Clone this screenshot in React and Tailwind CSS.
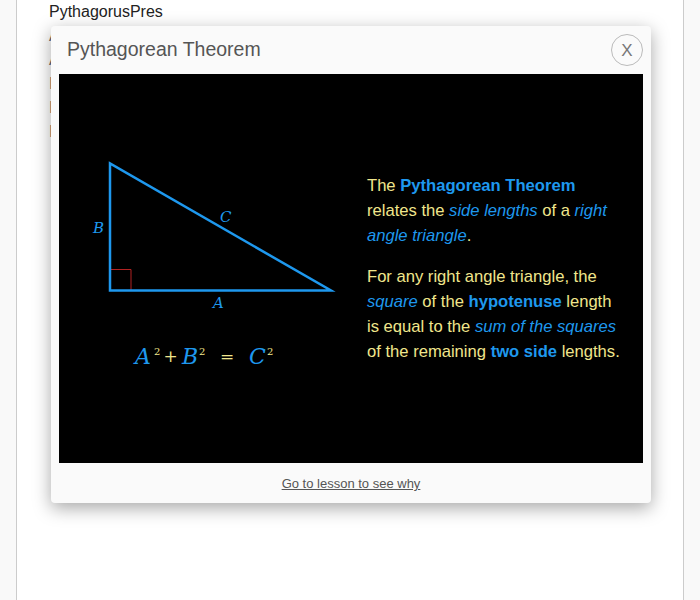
import React from "react";

const BLUE = "#1e98ee";
const KHAKI = "#f0e68c";

function Diagram() {
  return (
    <svg width="308" height="389" viewBox="0 0 308 389" className="shrink-0">
      <polyline points="51,195.5 72,195.5 72,216.5" fill="none" stroke="#b22222" strokeWidth="1" />
      <polygon points="51,89.5 51,216.5 272,216.5" fill="none" stroke={BLUE} strokeWidth="2.5" />
      <g fontFamily="'DejaVu Serif', serif" fontStyle="italic" fill={BLUE} fontSize="15">
        <text x="34" y="159">B</text>
        <text x="161" y="148">C</text>
        <text x="154" y="234">A</text>
      </g>
      <g fontFamily="'DejaVu Serif', serif" fontSize="22">
        <text x="76" y="290" fill={BLUE} fontStyle="italic">A</text>
        <text x="95" y="281" fill={KHAKI} fontSize="10">2</text>
        <text x="111.5" y="288" fill={KHAKI} fontSize="17" textAnchor="middle">+</text>
        <text x="123" y="290" fill={BLUE} fontStyle="italic">B</text>
        <text x="140" y="281" fill={KHAKI} fontSize="10">2</text>
        <text x="168" y="288" fill={KHAKI} fontSize="17" textAnchor="middle">=</text>
        <text x="190" y="290" fill={BLUE} fontStyle="italic">C</text>
        <text x="208" y="281" fill={KHAKI} fontSize="10">2</text>
      </g>
    </svg>
  );
}

export default function App() {
  return (
    <div className="min-h-[600px] bg-[#f9f9f9] px-[16px] font-['Liberation_Sans',Arial,sans-serif]">
      <div className="relative h-[600px] border-x border-[#cccccc] bg-white px-[32px] text-[16px] leading-6 text-[#222222]">
        <div>PythagorusPres</div>
        <div className="text-[#666666]">A right angle triangle</div>
        <div className="text-[#666666]">A hypotenuse</div>
        <div className="text-[#666666]">In any triangle</div>
        <div className="text-[#666666]">In a square</div>
        <div className="text-[#666666]">It follows</div>

        <div className="absolute left-[34px] top-[26px] flex w-[600px] flex-col rounded-[4px] bg-[#fafafa] shadow-[0_5px_18px_rgba(0,0,0,0.35)]">
          <div className="flex h-[48px] items-center justify-between pl-[16px] pr-[8px]">
            <div className="text-[19.5px] leading-none text-[#555555]">Pythagorean Theorem</div>
            <div className="flex h-[32px] w-[32px] items-center justify-center rounded-full border border-[#bbbbbb] text-[17px] leading-none text-[#777777]">
              X
            </div>
          </div>
          <div className="mx-[8px] flex h-[389px] items-center bg-black">
            <Diagram />
            <div className="w-[257px] text-[16.6px] leading-[25px] text-[#f0e68c]">
              <p>
                The <b className="text-[#1e98ee]">Pythagorean Theorem</b> relates the{" "}
                <i className="text-[#1e98ee]">side lengths</i> of a{" "}
                <i className="text-[#1e98ee]">right angle triangle</i>.
              </p>
              <p className="mt-[16px]">
                For any right angle triangle, the <i className="text-[#1e98ee]">square</i> of the{" "}
                <b className="text-[#1e98ee]">hypotenuse</b> length is equal to the{" "}
                <i className="text-[#1e98ee]">sum of the squares</i> of the remaining{" "}
                <b className="text-[#1e98ee]">two side</b> lengths.
              </p>
            </div>
          </div>
          <div className="flex h-[40px] items-center justify-center pt-[2px]">
            <span className="text-[13px] text-[#555555] underline">Go to lesson to see why</span>
          </div>
        </div>
      </div>
    </div>
  );
}
